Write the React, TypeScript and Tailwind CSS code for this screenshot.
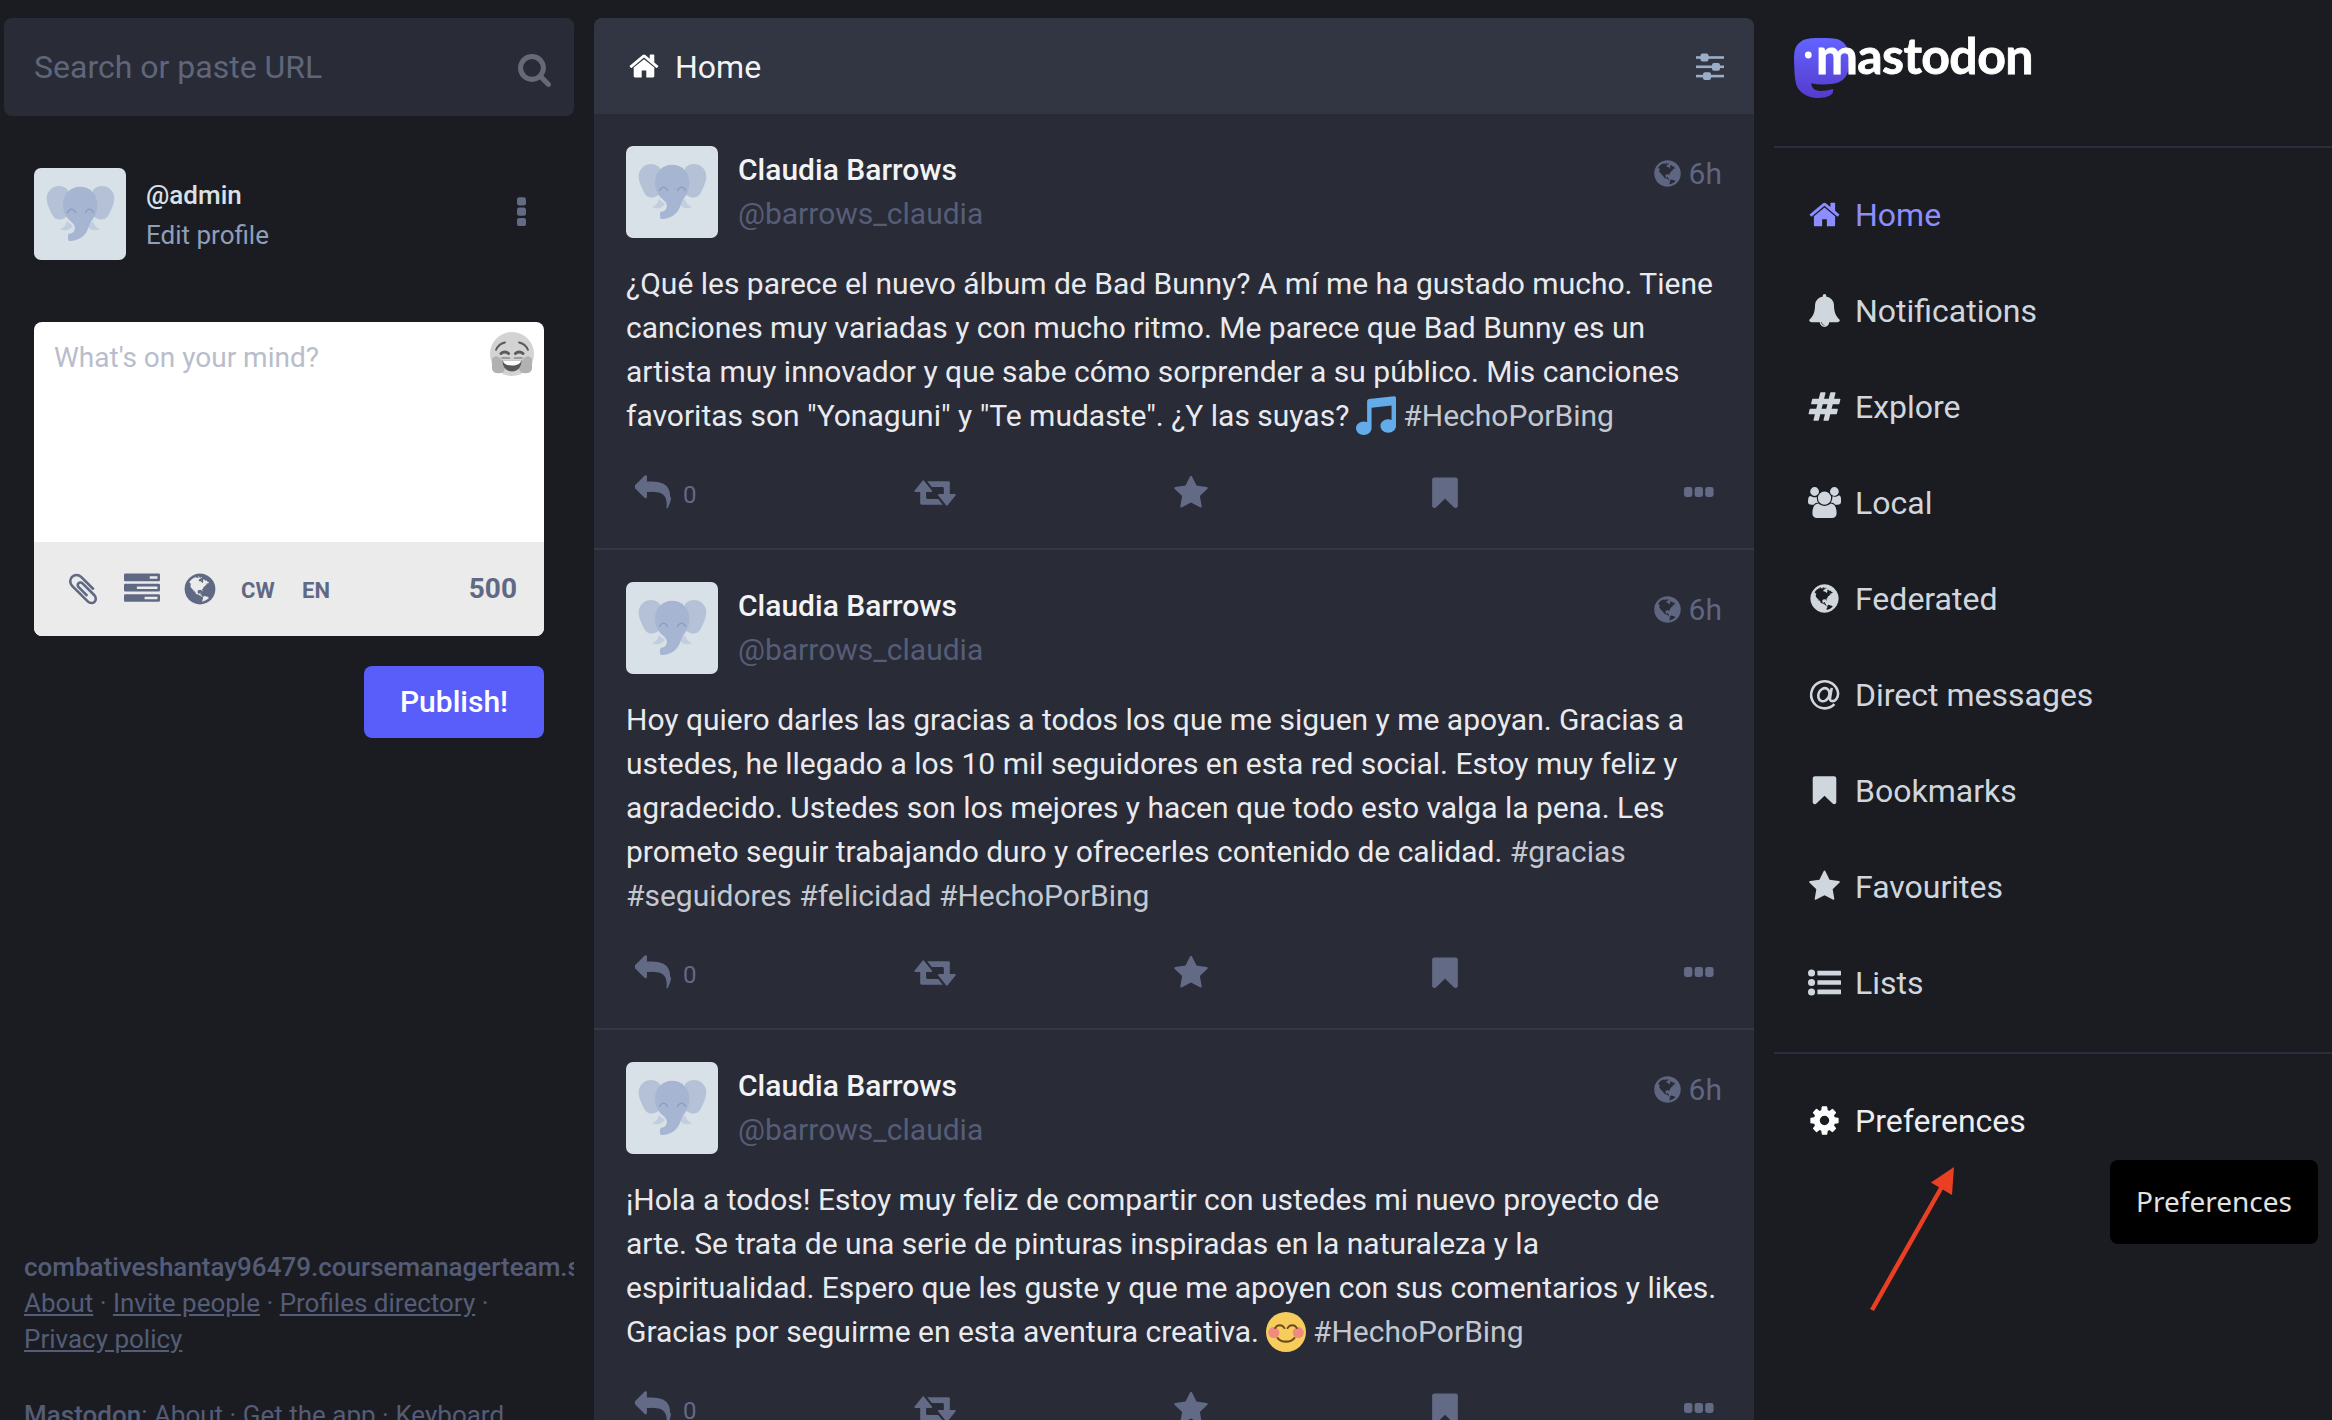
import React from 'react';

type IconProps = { className?: string; box?: string; children?: React.ReactNode };

function Glyph({ className = '', box = '0 0 1792 1792', children }: IconProps) {
  return (
    <svg viewBox={box} className={`shrink-0 ${className}`} fill="currentColor" aria-hidden="true">
      {children}
    </svg>
  );
}

const HomeIcon = ({ className }: IconProps) => (
  <Glyph className={className}>
    <path d="M1472 992v480q0 26-19 45t-45 19h-384v-384h-256v384h-384q-26 0-45-19t-19-45v-480q0-1 .5-3t.5-3l575-474 575 474q1 2 1 6zm223-69l-62 74q-8 9-21 11h-3q-13 0-21-7l-692-577-692 577q-12 8-24 7-13-2-21-11l-62-74q-8-10-7-23.5t11-21.5l719-599q32-26 76-26t76 26l244 204v-195q0-14 9-23t23-9h192q14 0 23 9t9 23v408l219 182q10 8 11 21.5t-7 23.5z" />
  </Glyph>
);

const BellIcon = ({ className }: IconProps) => (
  <Glyph className={className}>
    <path d="M912 1696q0-16-16-16-59 0-101.5-42.5t-42.5-101.5q0-16-16-16t-16 16q0 73 51.5 124.5t124.5 51.5q16 0 16-16zm816-288q0 52-38 90t-90 38h-448q0 106-75 181t-181 75-181-75-75-181h-448q-52 0-90-38t-38-90q50-42 91-88t85-119.5 74.5-158.5 50-206 19.5-260q0-152 117-282.5t307-158.5q-8-19-8-39 0-40 28-68t68-28 68 28 28 68q0 20-8 39 190 28 307 158.5t117 282.5q0 139 19.5 260t50 206 74.5 158.5 85 119.5 91 88z" />
  </Glyph>
);

const HashIcon = ({ className }: IconProps) => (
  <Glyph className={className}>
    <path d="M991 1024l64-256h-254l-64 256h254zm768-504l-56 224q-7 24-31 24h-327l-64 256h311q15 0 25 12 10 14 6 28l-56 224q-5 24-31 24h-327l-81 328q-7 24-31 24h-224q-16 0-26-12-9-12-6-28l78-312h-254l-81 328q-7 24-31 24h-225q-15 0-25-12-9-12-6-28l78-312h-311q-15 0-25-12-9-12-6-28l56-224q7-24 31-24h327l64-256h-311q-15 0-25-12-10-14-6-28l56-224q5-24 31-24h327l81-328q7-24 32-24h224q15 0 25 12 9 12 6 28l-78 312h254l81-328q7-24 32-24h224q15 0 25 12 9 12 6 28l-78 312h311q15 0 25 12 9 12 6 28z" />
  </Glyph>
);

const UsersIcon = ({ className }: IconProps) => (
  <Glyph className={className} box="64 0 1920 1792">
    <path d="M657 896q-162 5-265 128h-134q-82 0-138-40.5t-56-118.5q0-353 124-353 6 0 43.5 21t97.5 42.5 119 21.5q67 0 133-23-5 37-5 66 0 159 93 291zm1071 637q0 120-73 189.5t-194 69.5h-874q-121 0-194-69.5t-73-189.5q0-53 3.5-103.5t14-109 26.5-108.5 43-97.5 62-81 85.5-53.5 111.5-20q10 0 43 21.5t73 48 107 48 135 21.5 135-21.5 107-48 73-48 43-21.5q61 0 111.5 20t85.5 53.5 62 81 43 97.5 26.5 108.5 14 109 3.5 103.5zm-1024-1277q0 106-75 181t-181 75-181-75-75-181 75-181 181-75 181 75 75 181zm704 384q0 159-112.5 271.5t-271.5 112.5-271.5-112.5-112.5-271.5 112.5-271.5 271.5-112.5 271.5 112.5 112.5 271.5zm576 225q0 78-56 118.5t-138 40.5h-134q-103-123-265-128 93-132 93-291 0-29-5-66 66 23 133 23 59 0 119-21.5t97.5-42.5 43.5-21q124 0 124 353zm-128-609q0 106-75 181t-181 75-181-75-75-181 75-181 181-75 181 75 75 181z" />
  </Glyph>
);

const GlobeIcon = ({ className }: IconProps) => (
  <Glyph className={className}>
    <path d="M896 128q209 0 385.5 103t279.5 279.5 103 385.5-103 385.5-279.5 279.5-385.5 103-385.5-103-279.5-279.5-103-385.5 103-385.5 279.5-279.5 385.5-103zm274 521q-2 1-9.5 9.5t-13.5 9.5q2 0 4.5-5t5-11 3.5-7q6-7 22-15 14-6 52-12 34-8 51 11-2-2 9.5-13t14.5-12q3-2 15-4.5t15-7.5l2-22q-12 1-17.5-7t-6.5-21q0 2-6 8 0-7-4.5-8t-11.5 1-9 1q-10-3-15-7.5t-8-16.5-4-15q-2-5-9.5-11t-9.5-10q-1-2-2.5-5.5t-3-6.5-4-5.5-5.5-2.5-7 5-7.5 10-4.5 5q-3-2-6-1.5t-4.5 1-4.5 3-5 3.5q-3 2-8.5 3t-8.5 2q15-5-1-11-10-4-16-3 9-4 7.5-12t-8.5-14h5q-1-4-8.5-8.5t-17.5-8.5-13-6q-8-5-34-9.5t-33-.5q-5 6-4.5 10.5t4 14 3.500 12.5q1 6-5.5 13t-6.500 12q0 7 14 15.5t10 21.5q-3 8-16 16t-16 12q-5 8-1.5 18.5t10.5 16.5q2 2 1.5 4t-3.5 4.5-5.5 4-6.500 3.5l-3 2q-11 5-20.5-6t-13.5-26q-7-25-16-30-23-8-29 1-5-13-41-26-25-9-58-4 6-1 0-15-7-15-19-12 3-6 4-17.5t1-13.5q3-13 12-23 1-1 7-8.5t9.5-13.5.5-6q35 4 50-11 5-5 11.5-17t10.5-17q9-6 14-5.5t14.5 5.5 14.5 5q14 1 15.5-11t-7.5-20q12 1 3-17-4-7-8-9-12-4-27 5-8 4 2 8-1-1-9.5 10.5t-16.5 17.5-16-5q-1-1-5.5-13.5t-9.5-13.5q-8 0-16 15 3-8-11-15t-24-8q19-12-8-27-7-4-20.5-5t-19.5 4q-5 7-5.5 11.5t5 8 10.5 5.5 11.5 4 8.5 3q14 10 8 14-2 1-8.5 3.5t-11.5 4.5-6 4q-3 4 0 14t-2 14q-5-5-9-17.5t-7-16.5q7 9-25 6l-10-1q-4 0-16 2t-20.5 1-13.5-8q-4-8 0-20 1-4 4-2-4-3-11-9.5t-10-8.5q-46 15-94 41 6 1 12-1 5-2 13-6.5t10-5.5q34-14 42-7l5-5q14 16 20 25-7-4-30-1-20 6-22 12 7 12 5 18-4-3-11.5-10t-14.5-11-15-5q-16 0-22 1-146 80-235 222 7 7 12 8 4 1 5 9t2.5 11 11.5-3q9 8 3 19 1-1 44 27 19 17 21 21 3 11-10 18-1-2-9-9t-9-4q-3 5 .5 18.5t10.5 12.5q-7 0-9.5 16t-2.5 35.5-1 23.5l2 1q-3 12 5.5 34.5t21.5 19.5q-13 3 20 43 6 8 8 9 3 2 12 7.5t15 10 10 10.5q4 5 10 22.5t14 23.5q-2 6 9.5 20t10.5 23q-1 0-2.5 1t-2.5 1q3 7 15.5 14t15.5 13q1 3 2 10t3 11 8 2q2-20-24-62-15-25-17-29-3-5-5.5-15.5t-4.5-14.5q2 0 6 1.5t8.5 3.5 7.5 4 2 3q-3 7 2 17.5t12 18.5 17 19 12 13q6 6 14 19.5t0 13.5q9 0 20 10.5t17 19.5q5 8 8 26t5 24q2 7 8.5 13.5t12.5 9.5l16 8 13 7q5 2 18.5 10.5t21.5 11.5q10 4 16 4t14.5-2.5 13.5-3.5q15-2 29 15t21 21q36 19 55 11-2 1 .5 7.5t8 15.5 9 14.5 5.5 8.5q5 6 18 15t18 15q6-4 7-9-3 8 7 20t18 10q14-3 14-32-31 15-49-18 0-1-2.5-5.5t-4-8.5-2.5-8.5 0-7.5 5-3q9 0 10-3.5t-2-12.5-4-13q-1-8-11-20t-12-15q-5 9-16 8t-16-9q0 1-1.5 5.5t-1.5 6.5q-13 0-15-1 1-3 2.5-17.5t3.5-22.5q1-4 5.5-12t7.5-14.5 4-12.5-4.5-9.5-17.5-2.5q-19 1-26 20-1 3-3 10.5t-5 11.5-9 7q-7 3-24 2t-24-5q-13-8-22.5-29t-9.5-37q0-10 2.5-26.5t3-25-5.5-24.5q3-2 9-9.5t10-10.5q2-1 4.5-1.5t4.5 0 4-1.5 3-6q-1-1-4-3-3-3-4-3 7 3 28.5-1.5t27.5 1.5q15 11 22-2 0-1-2.5-9.5t-.5-13.5q5 27 29 9 3 3 15.5 5t17.5 5q3 2 7 5.5t5.5 4.5 5-.5 8.5-6.5q10 14 12 24 11 40 19 44 7 3 11 2t4.5-9.5 0-14-1.5-12.5l-1-8v-18l-1-8q-15-3-18.5-12t1.5-18.5 15-18.5q1-1 8-3.5t15.5-6.5 12.5-8q21-19 15-35 7 0 11-9-1 0-5-3t-7.5-5-4.5-2q9-5 2-16 5-3 7.5-11t7.5-10q9 12 21 2 7-8 1-16 5-7 20.5-10.5t18.5-9.5q7 2 8-2t1-12 3-12q4-5 15-9t13-5l17-11q3-4 0-4 18 2 31-11 10-11-6-20 3-6-3-9.5t-15-5.5q3-1 11.5-.5t10.5-1.5q15-10-7-16-17-5-43 12zm-163 877q206-36 351-189-3-3-12.5-4.5t-12.5-3.5q-18-7-24-8 1-7-2.5-13t-8-9-12.5-8-11-7q-2-2-7-6t-7-5.5-7.5-4.5-8.5-2-10 1l-3 1q-3 1-5.5 2.5t-5.5 3-4 3 0 2.5q-21-17-36-22-5-1-11-5.5t-10.5-7-10-1.5-11.5 7q-5 5-6 15t-2 13q-7-5 0-17.5t2-18.5q-3-6-10.5-4.5t-12 4.5-11.5 8.5-9 6.5-8.5 5.5-8.5 7.5q-3 4-6 12t-5 11q-2-4-11.5-6.5t-9.5-5.5q2 10 4 35t5 38q7 31-12 48-27 25-29 40-4 22 12 26 0 7-8 20.5t-7 21.5q0 6 2 16z" />
  </Glyph>
);

const AtIcon = ({ className }: IconProps) => (
  <Glyph className={className} box="0 0 32 32">
    <g fill="none" stroke="currentColor" strokeWidth="2.5" strokeLinecap="butt">
      <path d="M25.6 25.4A13.1 13.1 0 1 1 29.2 15c0 4.6-2.8 7.4-5.6 7.4-2 0-2.6-1.3-2.2-3.2L23 9.6" />
      <ellipse cx="15.4" cy="16.2" rx="5.2" ry="6.6" transform="rotate(24 15.4 16.2)" />
    </g>
  </Glyph>
);

const BookmarkIcon = ({ className }: IconProps) => (
  <Glyph className={className}>
    <path d="M1420 128q23 0 44 9 33 13 52.5 41t19.5 62v1289q0 34-19.5 62t-52.5 41q-19 8-44 8-48 0-83-32l-441-424-441 424q-36 33-83 33-23 0-44-9-33-13-52.5-41t-19.5-62v-1289q0-34 19.5-62t52.5-41q21-9 44-9h1048z" />
  </Glyph>
);

const StarIcon = ({ className }: IconProps) => (
  <Glyph className={className}>
    <path d="M1728 647q0 22-26 48l-363 354 86 500q1 7 1 20 0 21-10.5 35.5t-30.5 14.5q-19 0-40-12l-449-236-449 236q-22 12-40 12-21 0-31.5-14.5t-10.5-35.5q0-6 2-20l86-500-364-354q-25-27-25-48 0-37 56-46l502-73 225-455q19-41 49-41t49 41l225 455 502 73q56 9 56 46z" />
  </Glyph>
);

const ListIcon = ({ className }: IconProps) => (
  <Glyph className={className}>
    {[384, 896, 1408].map((y) => (
      <g key={y}>
        <circle cx="192" cy={y} r="192" />
        <rect x="512" y={y - 128} width="1280" height="256" rx="32" />
      </g>
    ))}
  </Glyph>
);

const CogIcon = ({ className }: IconProps) => (
  <Glyph className={className}>
    <path d="M1152 896q0-106-75-181t-181-75-181 75-75 181 75 181 181 75 181-75 75-181zm512-109v222q0 12-8 23t-20 13l-185 28q-19 54-39 91 35 50 107 138 10 12 10 25t-9 23q-27 37-99 108t-94 71q-12 0-26-9l-138-108q-44 23-91 38-16 136-29 186-7 28-36 28h-222q-14 0-24.5-8.5t-11.5-21.5l-28-184q-49-16-90-37l-141 107q-10 9-25 9-14 0-25-11-126-114-165-168-7-10-7-23 0-12 8-23 15-21 51-66.5t54-70.5q-27-50-41-99l-183-27q-13-2-21-12.5t-8-23.5v-222q0-12 8-23t19-13l186-28q14-46 39-92-40-57-107-138-10-12-10-24 0-10 9-23 26-36 98.5-107.5t94.5-71.5q13 0 26 10l138 107q44-23 91-38 16-136 29-186 7-28 36-28h222q14 0 24.5 8.5t11.5 21.5l28 184q49 16 90 37l142-107q9-9 24-9 13 0 25 10 129 119 165 170 7 8 7 22 0 12-8 23-15 21-51 66.5t-54 70.5q26 50 41 98l183 28q13 2 21 12.5t8 23.5z" />
  </Glyph>
);

const ReplyIcon = ({ className }: IconProps) => (
  <Glyph className={className}>
    <path d="M1792 1120q0 166-127 451-3 7-10.5 24t-13.5 30-13 22q-12 17-28 17-15 0-23.5-10t-8.5-25q0-9 2.5-26.5t2.5-23.5q5-68 5-123 0-112-19.5-200.5t-54-153.5-89.5-112-116-78-142.5-45.5-160-21-178.5-5.5h-224v256q0 26-19 45t-45 19-45-19l-512-512q-19-19-19-45t19-45l512-512q19-19 45-19t45 19 19 45v256h224q713 0 875 403 53 134 53 333z" />
  </Glyph>
);

const BoostIcon = ({ className }: IconProps) => (
  <Glyph className={className} box="0 0 22 18">
    <path d="M4.97 3.16c-.1.03-.17.1-.22.18L.8 8.24c-.2.3.03.78.4.8H3.6v2.68c0 4.26-.55 3.62 3.66 3.62h7.66l-2.3-2.84c-.03-.02-.03-.04-.05-.06H7.27c-.44 0-.72-.3-.72-.72v-2.7h2.5c.37.03.63-.48.4-.77L5.5 3.35c-.12-.17-.34-.25-.53-.2zm12.16.43c-.55-.02-1.32.02-2.4.02H7.1l2.32 2.85.03.06h5.25c.42 0 .72.28.72.72v2.7h-2.5c-.36.02-.56.54-.3.8l3.92 4.9c.18.25.6.25.78 0l3.94-4.9c.26-.28 0-.83-.37-.8H18.4V7.3c0-3.9.4-3.7-1.27-3.7z" />
  </Glyph>
);

const DotsIcon = ({ className }: IconProps) => (
  <Glyph className={className} box="0 0 30 10">
    <rect x="0" width="8.4" height="10" rx="2.4" />
    <rect x="10.6" width="8.4" height="10" rx="2.4" />
    <rect x="21.2" width="8.4" height="10" rx="2.4" />
  </Glyph>
);

const DotsVerticalIcon = ({ className }: IconProps) => (
  <Glyph className={className} box="0 0 10 30">
    <rect y="0.3" width="9" height="8.2" rx="2.2" />
    <rect y="10.6" width="9" height="8.2" rx="2.2" />
    <rect y="20.9" width="9" height="8.2" rx="2.2" />
  </Glyph>
);

const SearchIcon = ({ className }: IconProps) => (
  <Glyph className={className} box="64 128 1664 1664">
    <path d="M1216 832q0-185-131.5-316.5t-316.5-131.5-316.5 131.5-131.5 316.5 131.5 316.5 316.5 131.5 316.5-131.5 131.5-316.5zm512 832q0 52-38 90t-90 38q-54 0-90-38l-343-342q-179 124-399 124-143 0-273.5-55.5t-225-150-150-225-55.5-273.5 55.5-273.5 150-225 225-150 273.5-55.5 273.5 55.5 225 150 150 225 55.5 273.5q0 220-124 399l343 343q37 37 37 90z" />
  </Glyph>
);

const ClipIcon = ({ className }: IconProps) => (
  <Glyph className={className}>
    <path d="M1596 1385q0 117-79 196t-196 79q-135 0-235-100l-777-776q-113-115-113-271 0-159 110-270t269-111q158 0 273 113l605 606q10 10 10 22 0 16-30.5 46.5t-46.5 30.5q-13 0-23-10l-606-607q-79-77-181-77-106 0-179 75t-73 181q0 105 76 181l776 777q63 63 145 63 64 0 106-42t42-106q0-82-63-145l-581-581q-26-24-60-24-29 0-48 19t-19 48q0 32 25 59l410 410q10 10 10 22 0 16-31 47t-47 31q-12 0-22-10l-410-410q-63-61-63-149 0-82 57-139t139-57q88 0 149 63l581 581q100 98 100 235z" />
  </Glyph>
);

const PollIcon = ({ className }: IconProps) => (
  <Glyph className={className}>
    <path
      fillRule="evenodd"
      d="M1024 1408h640v-128h-640zM640 896h1024v-128h-1024zM1280 384h384v-128h-384zM64 1152h1664q64 0 64 64v256q0 64-64 64h-1664q-64 0-64-64v-256q0-64 64-64zM64 640h1664q64 0 64 64v256q0 64-64 64h-1664q-64 0-64-64v-256q0-64 64-64zM64 128h1664q64 0 64 64v256q0 64-64 64h-1664q-64 0-64-64v-256q0-64 64-64z"
    />
  </Glyph>
);

const SlidersIcon = ({ className }: IconProps) => (
  <Glyph className={className} box="0 0 28 28">
    <rect y="3.2" width="28" height="2.6" />
    <rect y="12.5" width="28" height="2.6" />
    <rect y="21.8" width="28" height="2.6" />
    <rect x="4.5" y="0.6" width="8" height="7.8" rx="2" />
    <rect x="16" y="9.9" width="8" height="7.8" rx="2" />
    <rect x="7" y="19.2" width="8" height="7.8" rx="2" />
  </Glyph>
);

function Avatar() {
  return (
    <svg viewBox="0 0 92 92" className="size-[92px] shrink-0 rounded-[7px] bg-[#d9e1e8]" aria-hidden="true">
      <g fill="#b4c1d7">
        <path d="M34 22C29 16.500 20 17 15.500 22.500c-4.500 5.500-3 12 0 18.500 3 6.500 4.500 10.500 10 10.500 4 0 6-2 8.500-3.500z" />
        <path d="M59 22c5-5.500 14-5 18.500.5 4.500 5.500 3 12 0 18.500-3 6.500-4.500 10.500-10 10.500-4 0-6-2-8.500-3.500z" />
      </g>
      <g fill="#c2cedd">
        <path d="M33 53c-1 4-3 6.500-7 8 5 2.500 10.500 1 13-3z" />
        <path d="M59 53c1 4 3 6.500 7 8-5 2.500-10.500 1-13-3z" />
      </g>
      <path
        fill="#a6b5d1"
        d="M46.200 18.800c-10.500 0-17.200 8.200-17.200 17.700 0 8 4 14 8.500 17.500 3 2.500 4 5 3 8-.9 2.600-2.800 3.700-5.500 3.700-1.500 0-1.300 7.200.2 7.300C43 73.300 50.500 69 53.500 62c1.200-3.200 2-6 4-9 3.500-4.500 5.900-9.500 5.900-16.500 0-9.500-6.700-17.700-17.200-17.700z"
      />
      <g fill="none" stroke="#8c9cc0" strokeWidth="1.300" strokeLinecap="round" strokeLinejoin="round">
        <path d="M33.500 44.500c2.500-4.500 5.500-4.500 8 0" />
        <path d="M51.500 44.500c2.500-4.500 5.500-4.500 8 0" />
      </g>
    </svg>
  );
}

function NoteEmoji() {
  return (
    <svg viewBox="0 0 36 36" className="mx-[7px] -mt-1 inline-block size-[40px] align-middle" aria-hidden="true">
      <path
        fill="#63acea"
        d="M34.209.206L11.791 2.793C10.806 2.907 10 3.811 10 4.803v18.782C9.090 23.214 8.075 23 7 23c-3.865 0-7 2.685-7 6 0 3.314 3.135 6 7 6s7-2.686 7-6V10.539l18-2.077v13.124c-.91-.372-1.925-.586-3-.586-3.865 0-7 2.685-7 6 0 3.314 3.135 6 7 6s7-2.686 7-6V1.803c0-.992-.806-1.710-1.791-1.597z"
      />
    </svg>
  );
}

function BlushEmoji() {
  return (
    <svg viewBox="0 0 36 36" className="mx-[7px] -mt-1 inline-block size-[40px] align-middle" aria-hidden="true">
      <circle cx="18" cy="18" r="18" fill="#f6cd5c" />
      <circle cx="7" cy="18.500" r="5" fill="#f08a80" />
      <circle cx="29" cy="18.500" r="5" fill="#f08a80" />
      <g fill="none" stroke="#6a4a1c" strokeLinecap="round">
        <path strokeWidth="1.700" d="M8.200 14.500c2-3.500 6.400-3.500 8.400 0M19.400 14.500c2-3.500 6.400-3.500 8.400 0" />
        <path strokeWidth="2" d="M10.500 23.500c3.600 4.300 11.400 4.300 15 0" />
      </g>
    </svg>
  );
}

function GrinEmoji() {
  return (
    <svg viewBox="0 0 44 44" className="h-[44px] w-[44px]" aria-hidden="true">
      <circle cx="22" cy="22" r="22" fill="#d3d3d3" />
      <path fill="#b1b1b1" d="M2 27c3-5 8-3 11 3 3 4 3 10-2 11-5 .6-8 0-9-4z" />
      <path fill="#b1b1b1" d="M42 27c-3-5-8-3-11 3-3 4-3 10 2 11 5 .6 8 0 9-4z" />
      <g fill="none" stroke="#5b5b5b" strokeWidth="1.800" strokeLinecap="round">
        <path d="M6 18c1.500-4 4.500-6.500 9-7.500M38 18c-1.500-4-4.500-6.500-9-7.500" />
        <path strokeWidth="3" d="M11 21.500c2-2 5.500-2 7.500 0M25.500 21.500c2-2 5.500-2 7.500 0" />
        <path stroke="#8b8b8b" strokeWidth="1.500" d="M12 26h7.500M24.500 26H32" />
      </g>
      <path fill="#585858" d="M12.500 28.500h19c0 6.500-4 11-9.500 11s-9.500-4.500-9.500-11z" />
      <path fill="#fff" d="M13 28.500h18c-.3 3.500-4 5-9 5s-8.700-1.500-9-5z" />
    </svg>
  );
}

function Tag({ children }: { children: React.ReactNode }) {
  return <span className="text-[#c3c8d0]">{children}</span>;
}

const posts: { lines: React.ReactNode[] }[] = [
  {
    lines: [
      '¿Qué les parece el nuevo álbum de Bad Bunny? A mí me ha gustado mucho. Tiene',
      'canciones muy variadas y con mucho ritmo. Me parece que Bad Bunny es un',
      'artista muy innovador y que sabe cómo sorprender a su público. Mis canciones',
      <>
        favoritas son "Yonaguni" y "Te mudaste". ¿Y las suyas?
        <NoteEmoji />
        <Tag>#HechoPorBing</Tag>
      </>,
    ],
  },
  {
    lines: [
      'Hoy quiero darles las gracias a todos los que me siguen y me apoyan. Gracias a',
      'ustedes, he llegado a los 10 mil seguidores en esta red social. Estoy muy feliz y',
      'agradecido. Ustedes son los mejores y hacen que todo esto valga la pena. Les',
      <>
        prometo seguir trabajando duro y ofrecerles contenido de calidad. <Tag>#gracias</Tag>
      </>,
      <Tag>#seguidores #felicidad #HechoPorBing</Tag>,
    ],
  },
  {
    lines: [
      '¡Hola a todos! Estoy muy feliz de compartir con ustedes mi nuevo proyecto de',
      'arte. Se trata de una serie de pinturas inspiradas en la naturaleza y la',
      'espiritualidad. Espero que les guste y que me apoyen con sus comentarios y likes.',
      <>
        Gracias por seguirme en esta aventura creativa.
        <BlushEmoji />
        <Tag>#HechoPorBing</Tag>
      </>,
    ],
  },
];

function Post({ lines }: { lines: React.ReactNode[] }) {
  return (
    <article className="shrink-0 border-b-2 border-[#343847] px-8 pt-8">
      <header className="flex h-[92px]">
        <Avatar />
        <div className="ml-5 flex-1 pt-[2px] text-[30px] leading-[44px]">
          <div className="font-medium text-[#f2f3f5]">Claudia Barrows</div>
          <div className="text-[#565d77]">@barrows_claudia</div>
        </div>
        <div className="flex h-[54px] items-center gap-2 text-[30px] text-[#5f6681]">
          <GlobeIcon className="-mr-[2px] size-[31px]" />
          <span>6h</span>
        </div>
      </header>
      <div className="mt-6 text-[30px] leading-[44px] whitespace-nowrap text-[#e9eaed]">
        {lines.map((line, i) => (
          <p key={i} className="h-[44px]">
            {line}
          </p>
        ))}
      </div>
      <div className="mt-[30px] flex h-[80px] items-start pl-[9px] text-[#626a86]">
        <div className="flex w-[278px] items-start gap-3">
          <ReplyIcon className="mt-[7px] size-9" />
          <span className="pt-[11px] text-[24px] leading-8">0</span>
        </div>
        <BoostIcon className="mt-1.5 h-9 w-11" />
        <StarIcon className="mt-[7px] ml-[216px] size-9" />
        <BookmarkIcon className="mt-[7px] ml-[218px] size-9" />
        <DotsIcon className="mt-[19px] ml-[221px] h-[10px] w-[30px]" />
      </div>
    </article>
  );
}

const nav = [
  { label: 'Home', icon: HomeIcon, active: true },
  { label: 'Notifications', icon: BellIcon },
  { label: 'Explore', icon: HashIcon },
  { label: 'Local', icon: UsersIcon },
  { label: 'Federated', icon: GlobeIcon },
  { label: 'Direct messages', icon: AtIcon },
  { label: 'Bookmarks', icon: BookmarkIcon },
  { label: 'Favourites', icon: StarIcon },
  { label: 'Lists', icon: ListIcon },
];

function Logo() {
  return (
    <div className="relative h-[60px] w-[240px]">
      <svg viewBox="0 0 75 79" preserveAspectRatio="none" className="h-[60px] w-[55px]" aria-hidden="true">
        <defs>
          <linearGradient id="body" x1="0" x2="0" y1="0" y2="1">
            <stop offset="0" stopColor="#6364ff" />
            <stop offset="1" stopColor="#563acc" />
          </linearGradient>
        </defs>
        <path
          fill="url(#body)"
          d="M73.840 17.490C72.700 9 65.300 2.310 56.530 1.020 55.050.8 49.440 0 36.460 0h-.1C23.370 0 20.590.8 19.110 1.020 10.580 2.280 2.790 8.290.9 16.880 0 21.110-.1 25.800.070 30.100c.24 6.170.29 12.320.85 18.470.380 4.080 1.060 8.130 2.020 12.110 1.790 7.360 9.060 13.490 16.180 15.990 7.630 2.600 15.830 3.040 23.680 1.250 4-1 7.500-2.500 9.200-4.500 1.200-1.400 1.400-3 1.400-6.400-5.500 1.700-11 2.600-17.500 2.600-8.500 0-11.800-4-12.300-10.100 4.900 1.200 10 1.800 15.100 1.800 5 0 10-.3 14.500-1 10-1.500 18.700-7 21-18.300 1.400-8 1.500-18 .59-24.530z"
        />
        <circle cx="19.500" cy="22.500" r="4.600" fill="#fff" />
      </svg>
      <span className="absolute top-[-13px] left-[22px] font-['Lato'] text-[50px] leading-[60px] font-bold tracking-[-0.6px] text-white [-webkit-text-stroke:0.8px_white]">
        mastodon
      </span>
    </div>
  );
}

export default function App() {
  return (
    <div className="relative flex h-[1420px] w-[2332px] overflow-hidden bg-[#1b1c21] font-['Roboto',sans-serif]">
      <aside className="ml-1 flex w-[570px] shrink-0 flex-col pt-[18px]">
        <div className="flex h-[98px] shrink-0 items-center justify-between rounded-lg bg-[#292b37] pr-[23px] pl-[30px]">
          <span className="text-[32px] text-[#5f667a]">Search or paste URL</span>
          <SearchIcon className="mt-1.5 size-[33px] text-[#666a78]" />
        </div>
        <div className="mt-[52px] flex h-[92px] shrink-0 pr-[47px] pl-[30px]">
          <Avatar />
          <div className="ml-5 flex-1 pt-[7px] text-[26px] leading-[40px]">
            <div className="font-medium text-[#d9e1e8]">@admin</div>
            <div className="text-[#8f9fba]">Edit profile</div>
          </div>
          <DotsVerticalIcon className="mt-[29px] h-[30px] w-[10px] text-[#626a86]" />
        </div>
        <div className="mx-[30px] mt-[62px] flex h-[314px] shrink-0 flex-col overflow-hidden rounded-lg bg-white">
          <div className="flex h-[220px] items-start justify-between pt-[10px] pr-[10px] pl-5">
            <span className="pt-[6px] text-[28px] leading-[40px] text-[#b9bdcb]">What's on your mind?</span>
            <GrinEmoji />
          </div>
          <div className="flex h-[94px] items-center bg-[#ebebeb] pr-[27px] pl-[31px] text-[#606984]">
            <ClipIcon className="size-9" />
            <PollIcon className="ml-[23px] size-9" />
            <GlobeIcon className="ml-[22px] size-9" />
            <span className="mt-0.5 ml-[23px] w-[61px] text-[22px] font-bold">CW</span>
            <span className="mt-0.5 text-[22px] font-bold">EN</span>
            <span className="ml-auto text-[28px] font-bold">500</span>
          </div>
        </div>
        <div className="mt-[30px] mr-[30px] flex h-[72px] w-[180px] shrink-0 items-center justify-center self-end rounded-lg bg-[#595dfa] pb-0.5 text-[30px] font-medium text-white">
          Publish!
        </div>
        <footer className="mt-[511px] overflow-hidden pl-5 text-[26px] leading-[36px] whitespace-nowrap text-[#545c77]">
          <p className="font-medium">combativeshantay96479.coursemanagerteam.s</p>
          <p>
            <span className="underline">About</span> · <span className="underline">Invite people</span> ·{' '}
            <span className="underline">Profiles directory</span> ·
          </p>
          <p>
            <span className="underline">Privacy policy</span>
          </p>
          <p className="mt-10">
            <span className="font-medium">Mastodon</span>: <span className="underline">About</span> ·{' '}
            <span className="underline">Get the app</span> · <span className="underline">Keyboard</span>
          </p>
        </footer>
      </aside>

      <main className="ml-5 flex w-[1160px] shrink-0 flex-col pt-[18px]">
        <div className="flex h-24 shrink-0 items-center rounded-t-lg bg-[#323542] pr-[30px] pl-[34px]">
          <HomeIcon className="size-8 text-white" />
          <span className="mt-px ml-[15px] text-[32px] text-[#f2f3f5]">Home</span>
          <SlidersIcon className="mt-0.5 ml-auto size-7 text-[#9baec8]" />
        </div>
        <div className="flex flex-1 flex-col bg-[#292b37]">
          {posts.map((post, i) => (
            <Post key={i} lines={post.lines} />
          ))}
        </div>
      </main>

      <aside className="ml-5 flex flex-1 flex-col">
        <div className="h-[148px] shrink-0 border-b-2 border-[#2c2d3b] pt-[38px] pl-5">
          <Logo />
        </div>
        <nav className="mt-[19px]">
          {nav.map(({ label, icon: Icon, active }) => (
            <div
              key={label}
              className={`flex h-24 items-center pb-px pl-[34px] text-[32px] ${active ? 'text-[#8c8dff]' : 'text-[#d0d6dd]'}`}
            >
              <Icon className="-mt-px h-[33px] w-[33px]" />
              <span className="ml-[14px]">{label}</span>
            </div>
          ))}
        </nav>
        <div className="mt-[21px] border-t-2 border-[#2c2d3b] pt-[19px]">
          <div className="flex h-24 items-center pb-px pl-[34px] text-[32px] text-[#eceef1]">
            <CogIcon className="-mt-px h-[33px] w-[33px] text-white" />
            <span className="ml-[14px]">Preferences</span>
          </div>
        </div>
      </aside>

      <div className="absolute top-[1160px] left-[2110px] flex h-[84px] w-[208px] items-center justify-center rounded-lg bg-black pb-[3px] font-['Noto_Sans'] text-[28px] text-[#e2e2e2]">
        Preferences
      </div>
      <svg viewBox="0 0 90 150" className="absolute top-[1164px] left-[1868px] h-[150px] w-[90px]" aria-hidden="true">
        <path d="M4 146L76 19" stroke="#eb3f24" strokeWidth="4.500" />
        <path d="M86 3L63 18.500 84 31z" fill="#eb3f24" />
      </svg>
    </div>
  );
}
